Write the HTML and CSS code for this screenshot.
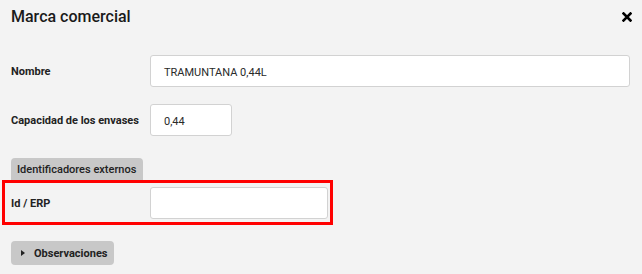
FILE: index.html
```html
<!DOCTYPE html>
<html lang="es">
<head>
<meta charset="utf-8">
<link rel="stylesheet" href="styles.css">
</head>
<body>
<div class="dialog">
  <div class="header">
    <h1 class="title">Marca comercial</h1>
    <button class="close" aria-label="Cerrar">
      <svg width="10" height="10" viewBox="0 0 10 10"><path d="M1.5 1.5 L8.5 8.5 M8.5 1.5 L1.5 8.5" stroke="#000" stroke-width="2.6" stroke-linecap="square"/></svg>
    </button>
  </div>
  <div class="form">
    <div class="row row-name">
      <label class="label">Nombre</label>
      <div class="input input-wide">TRAMUNTANA 0,44L</div>
    </div>
    <div class="row row-cap">
      <label class="label">Capacidad de los envases</label>
      <div class="input input-small">0,44</div>
    </div>
    <div class="section">
      <div class="tab">Identificadores externos</div>
      <div class="highlight">
        <div class="row row-erp">
          <label class="label">Id / ERP</label>
          <div class="input input-mid"></div>
        </div>
      </div>
    </div>
    <button class="toggle"><span class="caret"></span>Observaciones</button>
  </div>
</div>
</body>
</html>
```
FILE: styles.css
```css
* { box-sizing: border-box; }
html, body { margin: 0; padding: 0; }
body {
  background: #f3f3f3;
  font-family: Roboto, "Liberation Sans", sans-serif;
  color: #222;
  width: 642px;
  height: 274px;
  overflow: hidden;
}
.dialog { display: flex; flex-direction: column; }
.header {
  display: flex;
  align-items: center;
  justify-content: space-between;
  height: 33px;
  padding: 0 10px 0 11px;
}
.title {
  margin: 0;
  font-size: 16px;
  font-weight: 500;
  color: #1a1a1a;
}
.close {
  border: 0;
  background: none;
  padding: 0;
  width: 10px;
  height: 10px;
  display: flex;
}
.form {
  display: flex;
  flex-direction: column;
  padding-top: 22px;
}
.row {
  display: flex;
  align-items: center;
  padding-left: 11px;
}
.label {
  width: 139px;
  font-size: 11px;
  font-weight: 700;
  color: #222;
}
.input {
  height: 32px;
  background: #fff;
  border: 1px solid #d2d2d2;
  border-radius: 3px;
  font-size: 11px;
  color: #2a2a2a;
  display: flex;
  align-items: center;
  padding: 2px 0 0 13px;
}
.input-wide { width: 480px; }
.input-small { width: 82px; }
.input-mid { width: 178px; }
.row-cap { margin-top: 17px; }
.section {
  display: flex;
  flex-direction: column;
  align-items: flex-start;
  margin-top: 22px;
}
.tab {
  margin-left: 11px;
  height: 22px;
  padding: 0 6px;
  background: #c8c8c8;
  border-radius: 4px 4px 0 0;
  font-size: 11px;
  font-weight: 500;
  color: #222;
  display: flex;
  align-items: center;
  width: 132px;
}
.highlight {
  margin-left: 2px;
  width: 331px;
  border: 3px solid #ff0000;
  padding: 4px 0 3px;
}
.row-erp { padding-left: 6px; }
.toggle {
  margin: 16px 0 0 11px;
  width: 103px;
  height: 24px;
  border: 0;
  border-radius: 4px;
  background: #c8c8c8;
  font-family: inherit;
  font-size: 11px;
  font-weight: 700;
  color: #222;
  display: flex;
  align-items: center;
  padding: 0 0 0 10px;
}
.caret {
  width: 0;
  height: 0;
  border-left: 4px solid #222;
  border-top: 3.5px solid transparent;
  border-bottom: 3.5px solid transparent;
  margin-right: 9px;
}
```
